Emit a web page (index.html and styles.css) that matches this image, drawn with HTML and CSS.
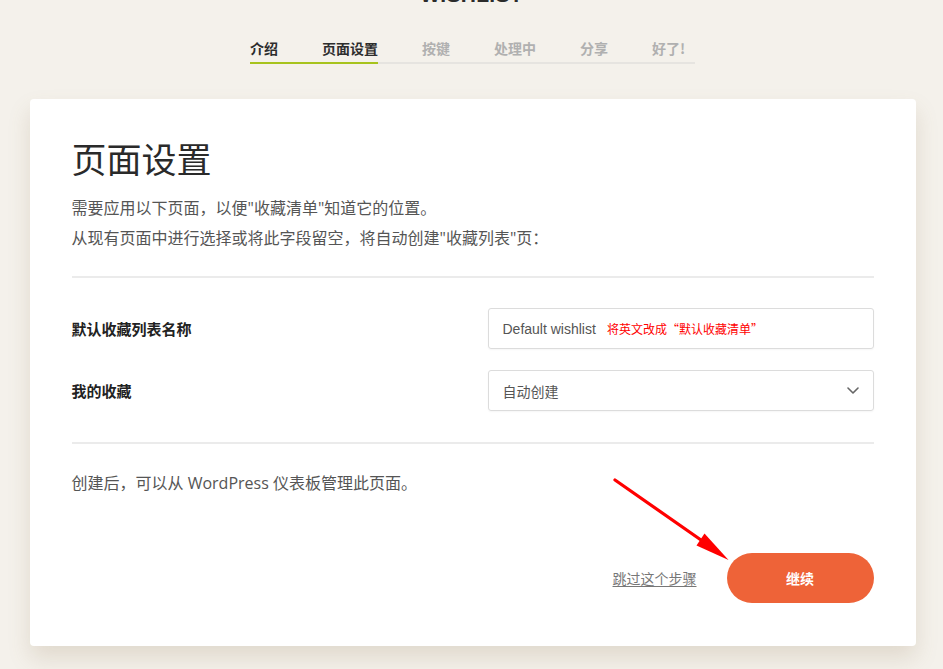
FILE: index.html
```html
<!DOCTYPE html>
<html lang="zh-CN">
<head>
<meta charset="utf-8">
<title>页面设置</title>
<link rel="stylesheet" href="styles.css">
</head>
<body>
<div class="page">
  <div class="logo">WISHLIST</div>
  <nav class="steps">
    <div class="step-labels">
      <span class="step done">介绍</span>
      <span class="step done">页面设置</span>
      <span class="step">按键</span>
      <span class="step">处理中</span>
      <span class="step">分享</span>
      <span class="step last">好了!</span>
    </div>
    <div class="step-bar"></div>
  </nav>

  <main class="card">
    <h1 class="title">页面设置</h1>
    <p class="intro">需要应用以下页面，以便"收藏清单"知道它的位置。<br>从现有页面中进行选择或将此字段留空，将自动创建"收藏列表"页：</p>
    <div class="divider"></div>
    <div class="form">
      <div class="label">默认收藏列表名称</div>
      <div class="field"><span class="value">Default wishlist</span><span class="note">将英文改成“默认收藏清单”</span></div>
      <div class="label">我的收藏</div>
      <div class="field select"><span class="value-cjk">自动创建</span>
        <svg class="chev" width="12" height="7" viewBox="0 0 12 7"><path d="M1 1l5 5 5-5" fill="none" stroke="#666" stroke-width="1.6" stroke-linecap="round" stroke-linejoin="round"/></svg>
      </div>
    </div>
    <div class="divider lower"></div>
    <p class="info">创建后，可以从 WordPress 仪表板管理此页面。</p>
    <div class="actions">
      <a class="skip" href="#">跳过这个步骤</a>
      <button class="continue">继续</button>
    </div>
    <svg class="arrow" width="160" height="100" viewBox="0 0 160 100">
      <line x1="35" y1="10" x2="121" y2="70" stroke="#ff0000" stroke-width="3.2" stroke-linecap="round"/>
      <polygon points="116.5,75.5 124.5,63.5 148.5,90" fill="#ff0000"/>
    </svg>
  </main>
</div>
</body>
</html>
```

FILE: styles.css
```css
html, body {
  margin: 0;
  padding: 0;
  background: #f4f1eb;
}
body {
  font-family: "Open Sans", "Noto Sans CJK SC", sans-serif;
  color: #555;
  height: 669px;
  overflow: hidden;
}
.page {
  display: flex;
  flex-direction: column;
  align-items: center;
}
.logo {
  margin-top: -17px;
  font-family: "Liberation Sans", sans-serif;
  font-weight: 700;
  font-size: 21px;
  line-height: 24px;
  color: #2b2b2b;
  letter-spacing: 0.3px;
}
.steps {
  margin-top: 31px;
  margin-left: 2px;
  width: 445px;
  display: flex;
  flex-direction: column;
}
.step-labels {
  display: flex;
  gap: 44px;
  font-family: "Noto Sans CJK SC", sans-serif;
  font-size: 14px;
  line-height: 20px;
  font-weight: 700;
}
.step { color: #b0b0b0; }
.step.done { color: #2d2d2d; }
.step-bar {
  margin-top: 4px;
  height: 2px;
  background: linear-gradient(to right, #a7c31d 128px, #e6e4e0 128px);
}
.card {
  position: relative;
  margin-top: 35px;
  margin-left: 2px;
  width: 886px;
  box-sizing: border-box;
  background: #fff;
  border-radius: 4px;
  padding: 38px 42px 43px;
  box-shadow: 0 12px 22px rgba(140, 110, 70, 0.18);
}
.title {
  margin: 0 0 14px;
  font-family: "Noto Sans CJK SC", sans-serif;
  font-weight: 400;
  font-size: 35px;
  line-height: 42px;
  color: #2a2a2a;
}
.intro {
  margin: 0;
  font-size: 16px;
  line-height: 30px;
  color: #555;
}
.divider {
  margin-top: 23px;
  height: 2px;
  background: #ebebeb;
}
.form {
  margin-top: 30px;
  display: grid;
  grid-template-columns: 1fr 386px;
  row-gap: 21px;
  align-items: center;
}
.label {
  font-family: "Noto Sans CJK SC", sans-serif;
  font-weight: 700;
  font-size: 15px;
  color: #222;
}
.field {
  height: 41px;
  box-sizing: border-box;
  border: 1px solid #dcdcdc;
  border-radius: 3px;
  display: flex;
  align-items: center;
  padding: 0 14px;
  box-shadow: 0 1px 2px rgba(0,0,0,0.04);
}
.value {
  font-family: "Liberation Sans", sans-serif;
  font-size: 14px;
  color: #555;
}
.note {
  margin-left: 11px;
  font-family: "Noto Sans CJK SC", sans-serif;
  font-size: 12px;
  color: #ff0000;
}
.select { justify-content: space-between; }
.value-cjk {
  font-family: "Noto Sans CJK SC", sans-serif;
  font-size: 14px;
  color: #555;
}
.divider.lower { margin-top: 31px; }
.info {
  margin: 27px 0 0;
  font-size: 16px;
  line-height: 24px;
  color: #555;
}
.actions {
  margin-top: 58px;
  display: flex;
  justify-content: flex-end;
  align-items: center;
  gap: 30px;
}
.skip {
  font-family: "Noto Sans CJK SC", sans-serif;
  font-size: 14px;
  color: #777;
  text-decoration: underline;
  text-underline-offset: 2px;
}
.continue {
  width: 147px;
  height: 50px;
  border: none;
  border-radius: 25px;
  background: #ee6338;
  color: #fff;
  font-family: "Noto Sans CJK SC", sans-serif;
  font-weight: 700;
  font-size: 14px;
  cursor: pointer;
}
.arrow {
  position: absolute;
  left: 550px;
  top: 371px;
}
```
